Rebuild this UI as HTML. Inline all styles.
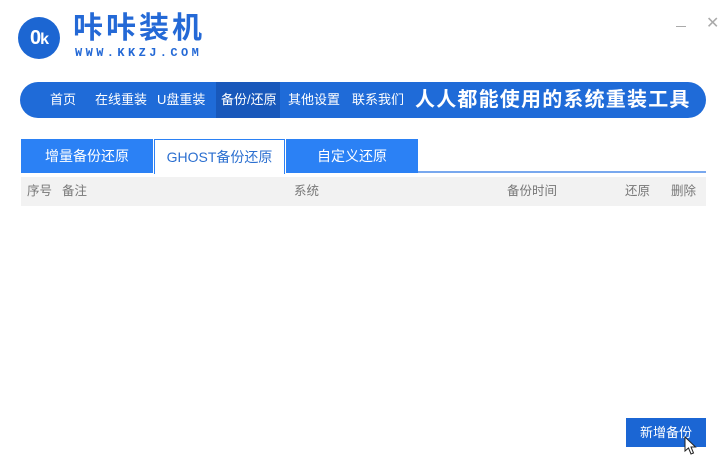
<!DOCTYPE html>
<html><head><meta charset="utf-8"><style>
*{margin:0;padding:0;box-sizing:border-box}
body{width:728px;height:464px;background:#fff;position:relative;overflow:hidden;font-family:"Liberation Sans","Noto Sans CJK SC",sans-serif;}
.abs{position:absolute}
.logo{left:18px;top:17px;width:42px;height:42px;border-radius:50%;background:#1c66d2;color:#fff;font-weight:bold;font-size:20px;line-height:42px;text-align:center;letter-spacing:-1px}
.title{left:73px;top:10px;font-size:30px;color:#2469d6;font-weight:bold;letter-spacing:3px;line-height:38px}
.url{left:75px;top:46px;font-size:12px;color:#2469d6;font-weight:bold;letter-spacing:3.4px;font-family:"Liberation Mono",monospace}
.nav{left:20px;top:82px;width:686px;height:36px;border-radius:18px;background:#1f6bd8}
.nav span{position:absolute;top:0;line-height:36px;color:#fff;font-size:13px}
.act{left:196px;width:64px;height:36px;background:#1858bb}
.nav .slogan{left:395px;top:0;line-height:36px;color:#fff;font-size:20px;font-weight:bold;letter-spacing:1.2px}
.tab{top:139px;height:34px;line-height:34px;text-align:center;font-size:14px;color:#fff;background:#2b81f5}
.th{top:177px;left:21px;width:685px;height:29px;background:#f2f2f2}
.th span{position:absolute;line-height:29px;font-size:12.5px;color:#777}
.btn{left:626px;top:418px;width:80px;height:29px;background:#1b66d4;color:#fff;font-size:13px;text-align:center;line-height:29px}
</style></head><body>
<div class="abs logo">0<span style="font-size:16px">k</span></div>
<div class="abs title">咔咔装机</div>
<div class="abs url">WWW.KKZJ.COM</div>
<div class="abs" style="left:676px;top:26px;width:10px;height:1px;background:#aaa"></div>
<div class="abs" style="left:706px;top:13px;font-size:16px;color:#aaa">✕</div>
<div class="abs nav">
<div class="abs act"></div>
<span style="left:30px">首页</span>
<span style="left:75px">在线重装</span>
<span style="left:137px">U盘重装</span>
<span style="left:201px">备份/还原</span>
<span style="left:268px">其他设置</span>
<span style="left:332px">联系我们</span>
<span class="slogan">人人都能使用的系统重装工具</span>
</div>
<div class="abs tab" style="left:21px;width:132px">增量备份还原</div>
<div class="abs tab" style="left:154px;width:131px;background:#fff;color:#2b6fd0;border:1px solid #2b81f5;border-bottom:none;height:35px">GHOST备份还原</div>
<div class="abs tab" style="left:286px;width:132px">自定义还原</div>
<div class="abs" style="left:418px;top:171px;width:288px;height:2px;background:#79a8ee"></div>
<div class="abs th">
<span style="left:6px">序号</span><span style="left:41px">备注</span>
<span style="left:273px">系统</span><span style="left:486px">备份时间</span>
<span style="left:604px">还原</span><span style="left:650px">删除</span>
</div>
<div class="abs btn">新增备份</div>
<svg class="abs" style="left:684px;top:436px" width="14" height="20" viewBox="0 0 14 20"><path d="M1 1 L1 15 L4.5 12 L7 18 L9.5 17 L7 11 L11.5 11 Z" fill="#fff" stroke="#222" stroke-width="1"/></svg>
</body></html>
